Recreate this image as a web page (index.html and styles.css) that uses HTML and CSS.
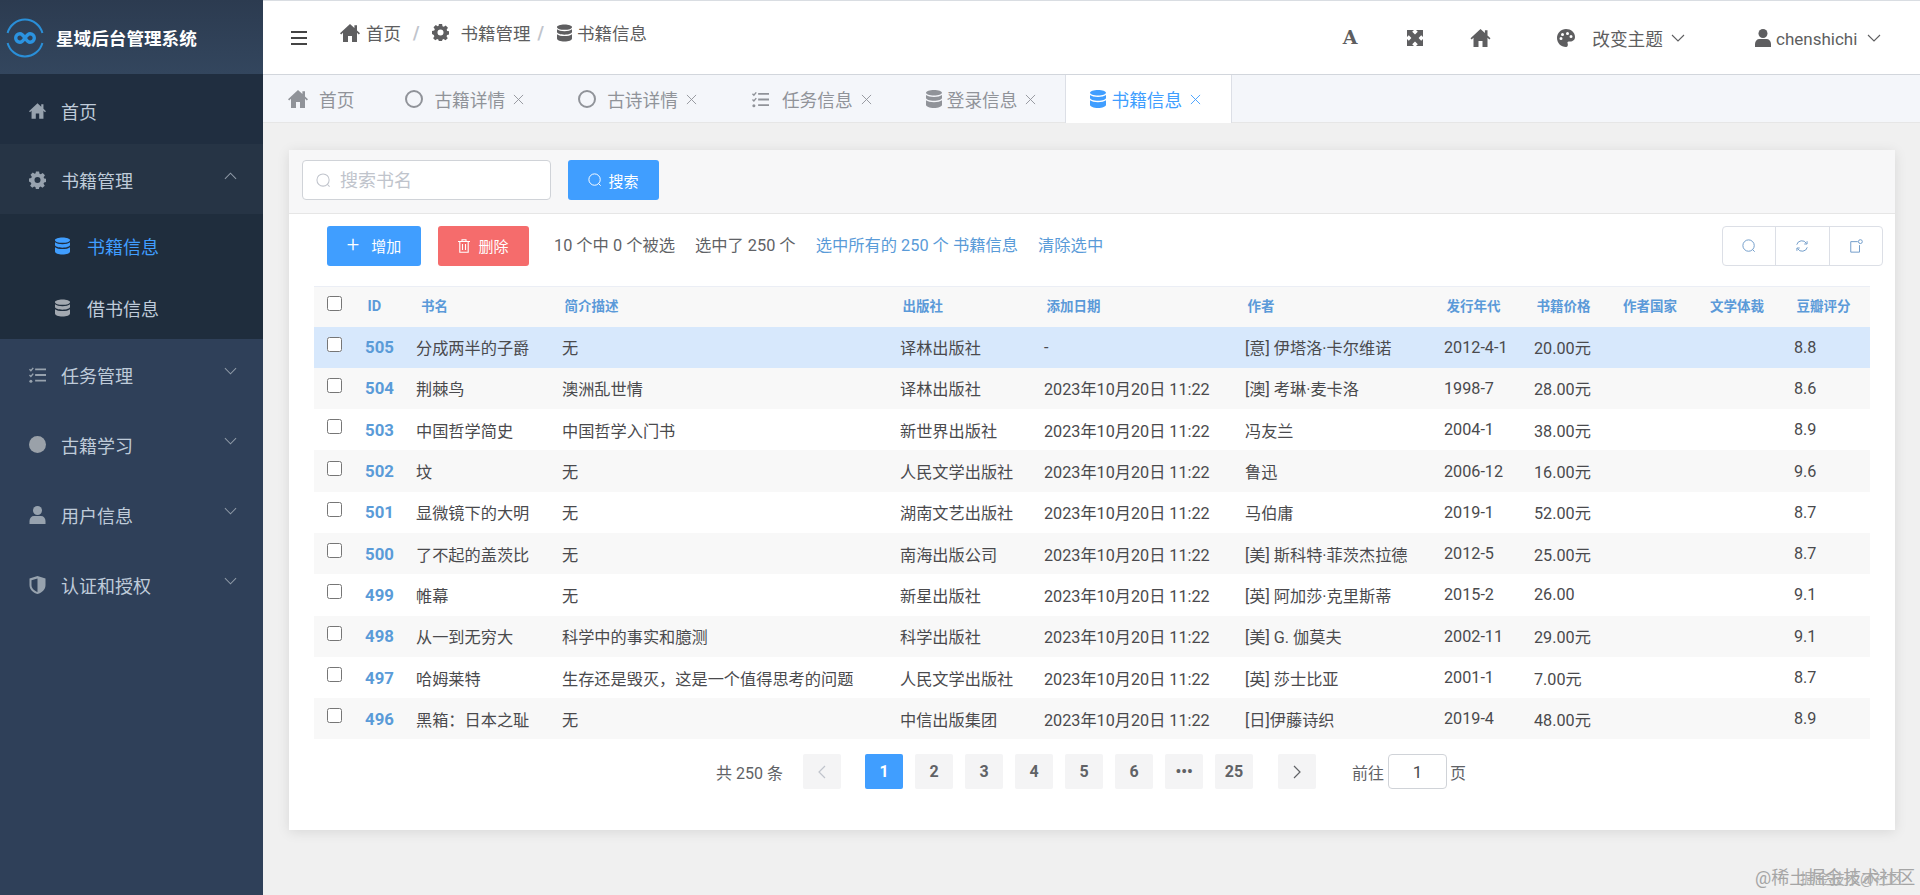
FILE: index.html
```html
<!DOCTYPE html>
<html lang="zh-CN">
<head>
<meta charset="utf-8">
<title>星域后台管理系统</title>
<link rel="stylesheet" href="styles.css">
</head>
<body>
<svg class="defs" width="0" height="0" aria-hidden="true">
  <symbol id="i-home" viewBox="0 0 20 18"><path d="M10 0 0 9.2l1.2 1.2L3 8.8V18h5v-6h4v6h5V8.8l1.8 1.6L20 9.2l-3-2.8V1.2h-2.6v2.8z"/></symbol>
  <symbol id="i-gear" viewBox="0 0 18 18"><path fill-rule="evenodd" d="M7.3 0h3.4l.4 2.4 1.4.6 2-1.4 2.4 2.4-1.4 2 .6 1.4 1.9.4v3.4l-2 .4-.6 1.4 1.3 2-2.4 2.3-2-1.3-1.4.6-.4 2.3H7.3l-.4-2.3-1.4-.6-2 1.3-2.3-2.3 1.3-2-.6-1.4L0 10.7V7.3l2.4-.4.6-1.4-1.4-2L4 1.1l2 1.4 1-.6zM9 5.8a3.2 3.2 0 1 0 0 6.4 3.2 3.2 0 0 0 0-6.4z"/></symbol>
  <symbol id="i-db" viewBox="0 0 16 18"><path d="M8 0c4.4 0 8 1.2 8 2.8S12.400 5.600 8 5.600 0 4.400 0 2.800 3.600 0 8 0zM0 5c1.500 1.300 4.600 2 8 2s6.500-.7 8-2v3c0 1.500-3.600 2.800-8 2.800S0 9.500 0 8zM0 10.200c1.500 1.300 4.600 2 8 2s6.500-.7 8-2v4.600C16 16.600 12.400 18 8 18s-8-1.400-8-3.200z"/></symbol>
  <symbol id="i-list" viewBox="0 0 18 18"><path d="M6.500 2h11.500v2H6.500zM6.500 8h11.500v2H6.500zM6.500 14h11.500v2H6.500z"/><path d="M.5 3l1.500 1.500L4.500 1.500" fill="none" stroke="currentColor" stroke-width="1.500"/><path d="M.5 9l1.500 1.500L4.500 7.500" fill="none" stroke="currentColor" stroke-width="1.500"/><circle cx="2" cy="15.500" r="1.600"/></symbol>
  <symbol id="i-user" viewBox="0 0 16 18"><circle cx="8" cy="4.500" r="4.500"/><path d="M0 18v-3c0-3 2-5 4.500-5h7c2.500 0 4.500 2 4.500 5v3z"/></symbol>
  <symbol id="i-shield" viewBox="0 0 16 18"><path fill-rule="evenodd" d="M8 0l8 2.500V9c0 4.500-3.500 7.800-8 9-4.500-1.200-8-4.500-8-9V2.500zM8 2.400 2 4.300V9c0 3.300 2.600 5.800 6 6.900z"/></symbol>
  <symbol id="i-palette" viewBox="0 0 18 18"><path fill-rule="evenodd" d="M9 0c5 0 9 3.500 9 8 0 2.800-2.200 4.500-4.800 4.500h-1.500c-1 0-1.500.8-1.100 1.700.6 1.300.2 3.800-1.600 3.800C4 18 0 14 0 9s4-9 9-9zM4 8a1.500 1.500 0 1 0 0 3 1.500 1.500 0 0 0 0-3zm1.500-4a1.500 1.500 0 1 0 0 3 1.500 1.500 0 0 0 0-3zm5-1a1.500 1.500 0 1 0 0 3 1.500 1.500 0 0 0 0-3zm3.500 3a1.500 1.500 0 1 0 0 3 1.500 1.500 0 0 0 0-3z"/></symbol>
  <symbol id="i-expand" viewBox="0 0 16 16"><path d="M0 0h7L5.200 1.800 8 4.400l2.800-2.600L9 0h7v7l-1.800-1.800L11.600 8l2.600 2.800L16 9v7H9l1.800-1.800L8 11.600l-2.800 2.600L7 16H0V9l1.800 1.800L4.400 8 1.800 5.200 0 7z"/></symbol>
  <symbol id="i-search" viewBox="0 0 16 16"><circle cx="7.500" cy="7.500" r="6.500" fill="none" stroke="currentColor" stroke-width="1.100"/><path d="M12 12l2.500 2.500" fill="none" stroke="currentColor" stroke-width="1.100"/></symbol>
  <symbol id="i-down" viewBox="0 0 14 8"><path d="M1 1l6 6 6-6" fill="none" stroke="currentColor" stroke-width="1.100"/></symbol>
  <symbol id="i-up" viewBox="0 0 14 8"><path d="M1 7l6-6 6 6" fill="none" stroke="currentColor" stroke-width="1.100"/></symbol>
  <symbol id="i-close" viewBox="0 0 12 12"><path d="M1 1l10 10M11 1 1 11" fill="none" stroke="currentColor" stroke-width="1"/></symbol>
</svg>

<div class="layout">
  <aside class="sidebar">
    <div class="brand">
      <svg class="logo" viewBox="0 0 40 40" width="40" height="40">
        <path d="M2.600 15A18 18 0 0 1 37.400 15M37.400 25A18 18 0 0 1 2.600 25" fill="none" stroke="#2a8fd8" stroke-width="2"/>
        <path d="M20 20c-2-3-3-4.300-5-4.300a4.300 4.300 0 0 0 0 8.600c2 0 3-1.300 5-4.300s3-4.300 5-4.300a4.300 4.300 0 0 1 0 8.600c-2 0-3-1.300-5-4.300z" fill="none" stroke="#2b93e0" stroke-width="3.400"/>
      </svg>
      <span class="brand-name">星域后台管理系统</span>
    </div>
    <nav class="menu">
      <a class="menu-item menu-first"><svg class="mi"><use href="#i-home"/></svg><span>首页</span></a>
      <a class="menu-item menu-open"><svg class="mi"><use href="#i-gear"/></svg><span>书籍管理</span><svg class="arrow"><use href="#i-up"/></svg></a>
      <div class="submenu">
        <a class="sub-item active"><svg class="si"><use href="#i-db"/></svg><span>书籍信息</span></a>
        <a class="sub-item"><svg class="si"><use href="#i-db"/></svg><span>借书信息</span></a>
      </div>
      <a class="menu-item"><svg class="mi"><use href="#i-list"/></svg><span>任务管理</span><svg class="arrow"><use href="#i-down"/></svg></a>
      <a class="menu-item"><span class="dot"></span><span>古籍学习</span><svg class="arrow"><use href="#i-down"/></svg></a>
      <a class="menu-item"><svg class="mi"><use href="#i-user"/></svg><span>用户信息</span><svg class="arrow"><use href="#i-down"/></svg></a>
      <a class="menu-item"><svg class="mi"><use href="#i-shield"/></svg><span>认证和授权</span><svg class="arrow"><use href="#i-down"/></svg></a>
    </nav>
  </aside>

  <main class="main">
    <header class="topbar">
      <div class="hamburger"><i></i><i></i><i></i></div>
      <div class="crumbs">
        <svg class="c-home"><use href="#i-home"/></svg><span class="c-t1">首页</span>
        <span class="c-sep">/</span>
        <svg class="c-gear"><use href="#i-gear"/></svg><span class="c-t2">书籍管理</span>
        <span class="c-sep c-sep2">/</span>
        <svg class="c-db"><use href="#i-db"/></svg><span class="c-t3">书籍信息</span>
      </div>
      <div class="top-right">
        <span class="font-a">A</span>
        <svg class="t-expand"><use href="#i-expand"/></svg>
        <svg class="t-home"><use href="#i-home"/></svg>
        <svg class="t-palette"><use href="#i-palette"/></svg>
        <span class="t-theme">改变主题</span>
        <svg class="t-arrow"><use href="#i-down"/></svg>
        <svg class="t-user"><use href="#i-user"/></svg>
        <span class="t-name">chenshichi</span>
        <svg class="t-arrow t-arrow2"><use href="#i-down"/></svg>
      </div>
    </header>

    <div class="tabs">
      <a class="tab tab-first"><svg class="tab-home"><use href="#i-home"/></svg><span>首页</span></a>
      <a class="tab"><span class="ring"></span><span>古籍详情</span><svg class="x"><use href="#i-close"/></svg></a>
      <a class="tab"><span class="ring"></span><span>古诗详情</span><svg class="x"><use href="#i-close"/></svg></a>
      <a class="tab"><svg class="tab-list"><use href="#i-list"/></svg><span>任务信息</span><svg class="x"><use href="#i-close"/></svg></a>
      <a class="tab"><svg class="tab-dbi"><use href="#i-db"/></svg><span>登录信息</span><svg class="x"><use href="#i-close"/></svg></a>
      <a class="tab tab-active"><svg class="tab-dbi"><use href="#i-db"/></svg><span>书籍信息</span><svg class="x"><use href="#i-close"/></svg></a>
    </div>

    <section class="content">
      <div class="card">
        <div class="search-bar">
          <div class="search-input"><svg class="s-ic"><use href="#i-search"/></svg><span class="s-ph">搜索书名</span></div>
          <button class="btn btn-search"><svg class="b-ic"><use href="#i-search"/></svg>搜索</button>
        </div>
        <div class="toolbar">
          <button class="btn btn-add"><span class="plus">+</span>增加</button>
          <button class="btn btn-del"><svg class="del-ic" viewBox="0 0 12 14"><path d="M0 2.500h12M4 2.500V.8h4v1.700M1.800 2.500v10.700h8.400V2.500M4.500 5v6M7.500 5v6" fill="none" stroke="currentColor" stroke-width="1.100"/></svg>删除</button>
          <span class="t-info t-first">10 个中 0 个被选</span>
          <span class="t-info">选中了 250 个</span>
          <a class="t-link">选中所有的 250 个 书籍信息</a>
          <a class="t-link">清除选中</a>
          <div class="tools">
            <span class="tool"><svg class="tool-ic"><use href="#i-search"/></svg></span>
            <span class="tool"><svg class="tool-ic" viewBox="0 0 16 16"><path d="M2 6.500A6 6 0 0 1 13 5M14 9.500A6 6 0 0 1 3 11" fill="none" stroke="currentColor" stroke-width="1.100"/><path d="M13.800 2.500v3.200h-3.200M2.200 13.500v-3.200h3.200" fill="none" stroke="currentColor" stroke-width="1.100"/></svg></span>
            <span class="tool"><svg class="tool-ic" viewBox="0 0 16 16"><path d="M10 3H2v12h10V7" fill="none" stroke="currentColor" stroke-width="1.100"/><circle cx="13" cy="3" r="2.200" fill="none" stroke="currentColor" stroke-width="1.100"/></svg></span>
          </div>
        </div>
        <table class="grid">
          <colgroup>
            <col class="c0"><col class="c1"><col class="c2"><col class="c3"><col class="c4"><col class="c5"><col class="c6"><col class="c7"><col class="c8"><col class="c9"><col class="c10"><col class="c11">
          </colgroup>
          <thead>
            <tr><th><input type="checkbox" class="chk"></th><th>ID</th><th>书名</th><th>简介描述</th><th>出版社</th><th>添加日期</th><th>作者</th><th>发行年代</th><th>书籍价格</th><th>作者国家</th><th>文学体裁</th><th>豆瓣评分</th></tr>
          </thead>
          <tbody>
            <tr class="selected"><td><input type="checkbox" class="chk"></td><td class="id">505</td><td>分成两半的子爵</td><td>无</td><td>译林出版社</td><td>-</td><td>[意] 伊塔洛·卡尔维诺</td><td>2012-4-1</td><td>20.00元</td><td></td><td></td><td>8.8</td></tr>
            <tr><td><input type="checkbox" class="chk"></td><td class="id">504</td><td>荆棘鸟</td><td>澳洲乱世情</td><td>译林出版社</td><td>2023年10月20日 11:22</td><td>[澳] 考琳·麦卡洛</td><td>1998-7</td><td>28.00元</td><td></td><td></td><td>8.6</td></tr>
            <tr><td><input type="checkbox" class="chk"></td><td class="id">503</td><td>中国哲学简史</td><td>中国哲学入门书</td><td>新世界出版社</td><td>2023年10月20日 11:22</td><td>冯友兰</td><td>2004-1</td><td>38.00元</td><td></td><td></td><td>8.9</td></tr>
            <tr><td><input type="checkbox" class="chk"></td><td class="id">502</td><td>坟</td><td>无</td><td>人民文学出版社</td><td>2023年10月20日 11:22</td><td>鲁迅</td><td>2006-12</td><td>16.00元</td><td></td><td></td><td>9.6</td></tr>
            <tr><td><input type="checkbox" class="chk"></td><td class="id">501</td><td>显微镜下的大明</td><td>无</td><td>湖南文艺出版社</td><td>2023年10月20日 11:22</td><td>马伯庸</td><td>2019-1</td><td>52.00元</td><td></td><td></td><td>8.7</td></tr>
            <tr><td><input type="checkbox" class="chk"></td><td class="id">500</td><td>了不起的盖茨比</td><td>无</td><td>南海出版公司</td><td>2023年10月20日 11:22</td><td>[美] 斯科特·菲茨杰拉德</td><td>2012-5</td><td>25.00元</td><td></td><td></td><td>8.7</td></tr>
            <tr><td><input type="checkbox" class="chk"></td><td class="id">499</td><td>帷幕</td><td>无</td><td>新星出版社</td><td>2023年10月20日 11:22</td><td>[英] 阿加莎·克里斯蒂</td><td>2015-2</td><td>26.00</td><td></td><td></td><td>9.1</td></tr>
            <tr><td><input type="checkbox" class="chk"></td><td class="id">498</td><td>从一到无穷大</td><td>科学中的事实和臆测</td><td>科学出版社</td><td>2023年10月20日 11:22</td><td>[美] G. 伽莫夫</td><td>2002-11</td><td>29.00元</td><td></td><td></td><td>9.1</td></tr>
            <tr><td><input type="checkbox" class="chk"></td><td class="id">497</td><td>哈姆莱特</td><td>生存还是毁灭，这是一个值得思考的问题</td><td>人民文学出版社</td><td>2023年10月20日 11:22</td><td>[英] 莎士比亚</td><td>2001-1</td><td>7.00元</td><td></td><td></td><td>8.7</td></tr>
            <tr><td><input type="checkbox" class="chk"></td><td class="id">496</td><td>黑箱：日本之耻</td><td>无</td><td>中信出版集团</td><td>2023年10月20日 11:22</td><td>[日]伊藤诗织</td><td>2019-4</td><td>48.00元</td><td></td><td></td><td>8.9</td></tr>
          </tbody>
        </table>
        <div class="pager">
          <span class="p-total">共 250 条</span>
          <span class="pg p-prev"><svg class="p-arrow" viewBox="0 0 8 14"><path d="M7 1 1 7l6 6" fill="none" stroke="currentColor" stroke-width="1.200"/></svg></span>
          <span class="pg p-on">1</span>
          <span class="pg">2</span>
          <span class="pg">3</span>
          <span class="pg">4</span>
          <span class="pg">5</span>
          <span class="pg">6</span>
          <span class="pg">•••</span>
          <span class="pg">25</span>
          <span class="pg p-next"><svg class="p-arrow" viewBox="0 0 8 14"><path d="M1 1l6 6-6 6" fill="none" stroke="currentColor" stroke-width="1.200"/></svg></span>
          <span class="p-goto">前往</span>
          <span class="p-input">1</span>
          <span class="p-page">页</span>
        </div>
      </div>
    </section>
  </main>
</div>
<div class="watermark">@稀土掘金技术社区</div>
<div class="watermark watermark2">掘金技术@社区</div>
</body>
</html>
```

FILE: styles.css
```css
* { box-sizing: border-box; }
html, body { margin: 0; height: 895px; overflow: hidden; }
body { font-family: Roboto, "Noto Sans CJK SC", sans-serif; font-size: 16px; color: #4a4a4d; background: #f0f0f0; }
a { color: inherit; text-decoration: none; }
svg { fill: currentColor; flex: none; }
.defs { position: absolute; }

.layout { display: flex; height: 895px; }
.sidebar { width: 263px; flex: none; background: #2f4059; color: #bfcbd9; font-size: 18px; }
.brand { height: 74px; display: flex; align-items: center; padding-left: 5px; background: linear-gradient(#2c3b50, #33465e); }
.logo { flex: none; margin-top: 1px; }
.brand-name { margin-left: 11px; color: #fff; font-weight: 700; font-size: 17.6px; }
.menu-item { height: 70px; padding-top: 1px; display: flex; align-items: center; position: relative; }
.menu-first { background: #202e40; padding-top: 4px; }
.menu-open { background: #263445; }
.mi { width: 17px; height: 18px; margin: 0 15px 0 29px; color: #97a2ae; }
.dot { width: 17px; height: 17px; border-radius: 50%; background: #9aa1a9; margin: 0 15px 0 29px; }
.arrow { position: absolute; right: 26px; top: 28px; width: 13px; height: 8px; color: #8f9aa7; }
.submenu { background: #1f2d3d; padding-bottom: 1px; }
.sub-item { height: 62px; padding: 2px 0 0 55px; display: flex; align-items: center; }
.si { width: 15px; height: 18px; margin-right: 17px; color: #a3a9b1; }
.sub-item.active { color: #409eff; }
.sub-item.active .si { color: #409eff; }

.main { flex: 1; min-width: 0; display: flex; flex-direction: column; }
.topbar { height: 75px; flex: none; background: #fff; border-top: 1px solid #d9dde2; border-bottom: 1px solid #d2d6dc; display: flex; align-items: center; position: relative; color: #5e5e60; }
.hamburger { width: 16px; margin-left: 28px; display: flex; flex-direction: column; gap: 4px; margin-top: 1px; }
.hamburger i { display: block; height: 2px; background: #444; }
.crumbs { display: flex; align-items: center; font-size: 17.5px; margin-left: 33px; margin-top: -10px; }
.c-home { width: 20px; height: 18px; }
.c-t1 { margin-left: 6px; }
.c-sep { margin-left: 12px; color: #c0c4cc; font-weight: 700; }
.c-gear { width: 17px; height: 17px; margin-left: 12px; }
.c-t2 { margin-left: 12px; }
.c-sep2 { margin-left: 7px; }
.c-db { width: 15px; height: 18px; margin-left: 13px; }
.c-t3 { margin-left: 5px; }
.top-right { margin-left: auto; display: flex; align-items: center; }
.font-a { font-family: "DejaVu Serif", serif; font-weight: 700; font-size: 19px; width: 16px; text-align: center; margin-top: -2px; }
.t-expand { width: 16px; height: 16px; margin-left: 49px; }
.t-home { width: 21px; height: 18px; margin-left: 47px; }
.t-palette { width: 18px; height: 18px; margin-left: 66px; }
.t-theme { margin-left: 17px; font-size: 17.7px; }
.t-arrow { width: 14px; height: 8px; margin-left: 8px; }
.t-user { width: 16px; height: 18px; margin-left: 70px; }
.t-name { margin-left: 5px; font-size: 17px; width: 83px; line-height: 24px; margin-top: 2px; }
.t-arrow2 { margin-left: 8px; margin-right: 39px; }

.tabs { height: 48px; flex: none; background: #f4f6fa; border-bottom: 1px solid #e6e6e6; display: flex; color: #909399; font-size: 17.7px; }
.tab { display: flex; align-items: center; padding: 0 27px; height: 48px; }
.tab-first { padding: 0 24px 0 25px; }
.tab-home { width: 20px; height: 18px; margin-right: 11px; }
.ring { width: 18px; height: 18px; border: 2px solid #909399; border-radius: 50%; margin-right: 11px; }
.tab-list { width: 19px; height: 17px; margin-right: 12px; }
.tab-dbi { width: 16px; height: 18px; margin-right: 5px; }
.x { width: 11px; height: 11px; margin-left: 8px; }
.tab-active { background: #fff; color: #409eff; padding: 0 30px 0 24px; border-left: 1px solid #dcdfe6; border-right: 1px solid #dcdfe6; margin-left: 2px; }

.content { flex: 1; padding: 27px 25px 0 26px; background: #f0f0f0; }
.card { height: 680px; background: #fff; box-shadow: 0 2px 12px rgba(0,0,0,.1); }
.search-bar { height: 64px; background: #f7f7f8; border-bottom: 1px solid #e6e6e6; padding: 10px 13px; display: flex; gap: 17px; }
.search-input { width: 249px; height: 40px; background: #fff; border: 1px solid #d0d3d8; border-radius: 4px; display: flex; align-items: center; padding-left: 13px; color: #c0c4cc; font-size: 18px; }
.s-ic { width: 15px; height: 15px; margin-right: 9px; }
.s-ph { margin-top: -3px; }
.btn { height: 40px; border: 0; border-radius: 3px; color: #fff; font: inherit; font-size: 15px; display: flex; align-items: center; justify-content: center; padding: 0; }
.btn-search { width: 91px; background: #409eff; }
.b-ic { width: 14px; height: 14px; margin-right: 6px; }
.toolbar { padding: 12px 12px 0 38px; height: 72px; display: flex; align-items: flex-start; font-size: 16.3px; }
.toolbar .t-info, .toolbar .t-link { line-height: 40px; }
.btn-add { width: 94px; background: #409eff; padding-bottom: 2px; }
.plus { font-size: 22px; font-weight: 300; line-height: 1; margin-right: 12px; margin-top: -1px; }
.btn-del { width: 91px; margin-left: 17px; background: #f56c6c; padding-bottom: 2px; }
.del-ic { width: 12px; height: 14px; margin-right: 8px; fill: none; margin-top: 2px; }
.t-info { margin-left: 20px; color: #606266; }
.t-first { margin-left: 25px; }
.t-link { margin-left: 20px; color: #5a9bd8; }
.tools { margin-left: auto; display: flex; height: 40px; border: 1px solid #dcdfe6; border-radius: 4px; width: 161px; }
.tool { flex: 1; display: flex; align-items: center; justify-content: center; border-left: 1px solid #dcdfe6; color: #6f9bc9; }
.tool:first-child { border-left: 0; }
.tool-ic { width: 14px; height: 14px; fill: none; }

.grid { margin-left: 25px; width: 1556px; border-collapse: collapse; table-layout: fixed; border-top: 1px solid #ebeef5; font-size: 16.2px; }
.c0 { width: 43px; } .c1 { width: 51px; } .c2 { width: 146px; } .c3 { width: 338px; }
.c4 { width: 144px; } .c5 { width: 201px; } .c6 { width: 199px; } .c7 { width: 90px; }
.c8 { width: 90px; } .c9 { width: 87px; } .c10 { width: 83px; } .c11 { width: 84px; }
.grid th { height: 40px; padding: 0 0 3px 10.5px; background: #f8f8f8; color: #5b9ad9; font-size: 13.5px; font-weight: 700; text-align: left; }
.grid th:nth-child(2) { font-size: 14.5px; padding-bottom: 0; }
.grid th:nth-child(3) { padding-left: 13px; }
.grid th:nth-child(10), .grid th:nth-child(11) { padding-left: 7px; }
.grid td { height: 41.3px; padding: 0 0 0 8px; white-space: nowrap; overflow: hidden; color: #4a4a4d; }
.grid th:first-child, .grid td:first-child { padding: 0 0 6px 13px; }
.grid tbody tr:nth-child(even) { background: #f8f8f8; }
.grid tbody tr.selected { background: #d7e8fc; }
.grid td.id { color: #5a9bd8; font-weight: 700; font-size: 16.8px; }
.chk { width: 15px; height: 15px; margin: 0; display: block; }

.pager { padding: 15px 0 0 427px; display: flex; align-items: center; height: 50px; color: #606266; }
.p-total { width: 87px; }
.pg { width: 38px; height: 35px; margin-right: 12px; background: #f4f4f5; border-radius: 2px; display: flex; align-items: center; justify-content: center; font-weight: 700; color: #606266; }
.p-prev { margin-right: 24px; color: #c0c4cc; }
.p-next { margin-left: 13px; margin-right: 36px; }
.p-arrow { width: 8px; height: 14px; fill: none; }
.p-on { background: #409eff; color: #fff; }
.p-input { width: 59px; height: 35px; margin-left: 4px; border: 1px solid #d0d3d8; border-radius: 4px; display: flex; align-items: center; justify-content: center; font-size: 17px; color: #4a4a4d; }
.p-page { margin-left: 3px; }

.watermark { position: absolute; left: 1755px; top: 866px; font-size: 18px; line-height: 24px; color: #a5a5a5; white-space: nowrap; }
.watermark2 { left: 1800px; top: 867px; font-size: 15px; color: #adadad; }
```
